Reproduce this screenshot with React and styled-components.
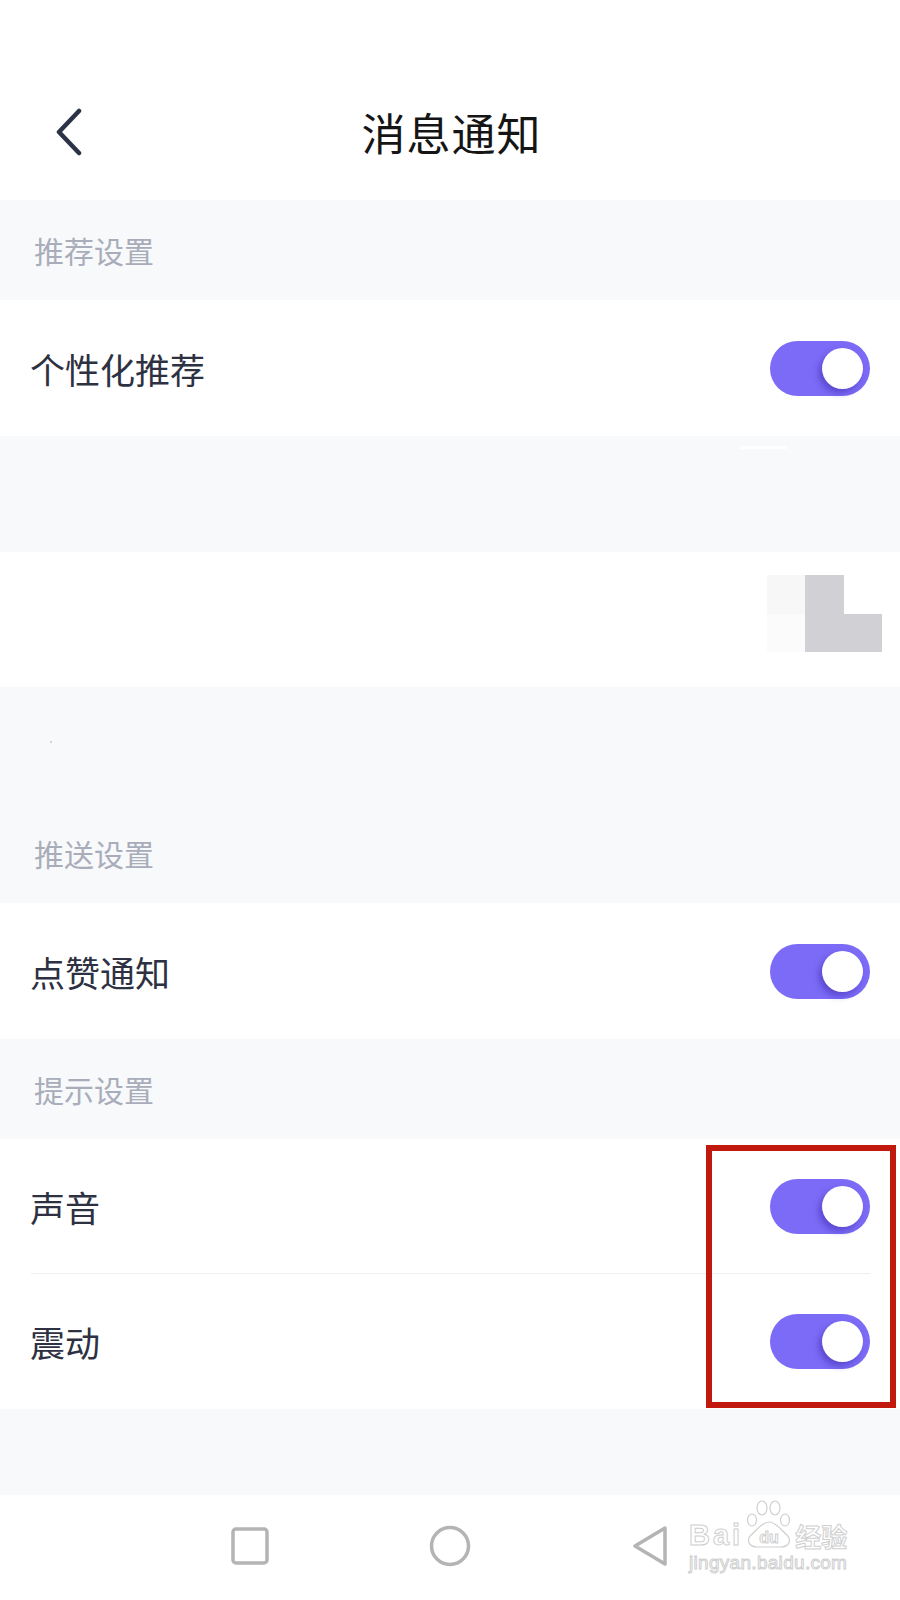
import React from 'react'
import styled, { createGlobalStyle } from 'styled-components'

const GlobalStyle = createGlobalStyle`
  html, body {
    margin: 0;
    padding: 0;
    background: #fff;
  }
  body {
    font-family: "Noto Sans CJK SC", "Noto Sans", sans-serif;
  }
`

const Page = styled.div`
  position: relative;
  width: 900px;
  min-height: 1600px;
  display: flex;
  flex-direction: column;
  background: #f8f9fb;
`

const Header = styled.header`
  height: 200px;
  box-sizing: border-box;
  padding: 72px 0 8px;
  background: #fff;
`

const NavBar = styled.div`
  height: 120px;
  display: grid;
  grid-template-columns: 1fr auto 1fr;
  align-items: center;
`

const BackButton = styled.div`
  padding-left: 55px;
  display: flex;
  align-items: center;
  color: #2c3346;
`

const Title = styled.h1`
  margin: 0 0 0 3px;
  font-size: 44px;
  font-weight: 400;
  color: #151515;
  letter-spacing: 1px;
`

const SectionTitle = styled.div`
  height: 100px;
  box-sizing: border-box;
  padding-left: 34px;
  display: flex;
  align-items: center;
  font-size: 30px;
  color: #a9adba;
`

const Gap = styled.div`
  height: ${p => p.h}px;
  box-sizing: border-box;
  padding: ${p => p.pad || '0'};
`

const Streak = styled.div`
  width: 47px;
  height: 3px;
  border-radius: 2px;
  background: #ffffff;
`

const Speck = styled.div`
  width: 2px;
  height: 2px;
  border-radius: 1px;
  background: #c4c6cc;
`

const Group = styled.div`
  background: #fff;
`

const Row = styled.div`
  height: ${p => p.h || 136}px;
  box-sizing: border-box;
  padding: 0 30px 0 30px;
  display: flex;
  align-items: center;
  justify-content: space-between;
`

const Label = styled.span`
  font-size: 35px;
  color: #2d3142;
`

const Divider = styled.div`
  height: 1px;
  margin: 0 30px 0 31px;
  background: #eeeff2;
`

const Track = styled.div`
  width: 100px;
  height: 55px;
  box-sizing: border-box;
  padding: 7px;
  border-radius: 28px;
  background: #7b6bf6;
  display: flex;
  justify-content: flex-end;
  align-items: center;
`

const Knob = styled.div`
  width: 41px;
  height: 41px;
  border-radius: 50%;
  background: #fff;
  box-shadow: -3px 4px 6px rgba(58, 38, 170, 0.5);
`

const MosaicRow = styled.div`
  height: 135px;
  box-sizing: border-box;
  padding: 23px 18px 0 0;
  background: #fff;
  display: flex;
  justify-content: flex-end;
  align-items: flex-start;
`

const Mosaic = styled.div`
  display: grid;
  grid-template-columns: repeat(3, 38.5px);
  grid-template-rows: repeat(2, 38.5px);
`

const Cell = styled.div`
  background: ${p => p.c};
`

const BottomBar = styled.nav`
  margin-top: auto;
  height: 105px;
  background: #fff;
  display: flex;
  padding-left: 150px;
`

const NavCell = styled.div`
  width: 200px;
  display: flex;
  align-items: center;
  justify-content: center;
  padding-bottom: 4px;
`

const Annotation = styled.div`
  position: absolute;
  left: 706px;
  top: 1145px;
  width: 190px;
  height: 263px;
  box-sizing: border-box;
  border: 6px solid #c1190e;
`

const Watermark = styled.div`
  position: absolute;
  left: 689px;
  top: 1500px;
  width: 170px;
  display: flex;
  flex-direction: column;
  align-items: flex-start;
  font-family: "Liberation Sans", Arial, sans-serif;
  color: #fff;
  -webkit-text-stroke: 1px #cfcfcf;
`

const MarkTop = styled.div`
  display: flex;
  align-items: flex-end;
  height: 48px;
`

const Bai = styled.span`
  font-size: 29px;
  font-weight: 700;
  letter-spacing: 3px;
  line-height: 1;
  margin-bottom: -2px;
`

const Jing = styled.span`
  font-family: "Noto Sans CJK SC", sans-serif;
  font-size: 26px;
  font-weight: 700;
  line-height: 1;
  margin-bottom: -1px;
`

const Url = styled.span`
  font-size: 19px;
  line-height: 1;
  margin-top: 5px;
  letter-spacing: 0.3px;
`

const Toggle = () => (
  <Track>
    <Knob />
  </Track>
)

const Paw = () => (
  <svg width="52" height="48" viewBox="0 0 52 48" fill="#fff" stroke="#cfcfcf" strokeWidth="1.2">
    <ellipse cx="9" cy="20" rx="4.5" ry="6" />
    <ellipse cx="19" cy="8" rx="5" ry="7" />
    <ellipse cx="32" cy="8" rx="5" ry="7" />
    <ellipse cx="42" cy="20" rx="4.5" ry="6" />
    <path d="M26 22 C19 22 14 30 8 35 C3 40 6 47 14 47 L38 47 C46 47 49 40 44 35 C38 30 33 22 26 22 Z" />
    <text x="26" y="43" textAnchor="middle" fontFamily="Liberation Sans, Arial, sans-serif" fontSize="16" fontWeight="700" fill="#fff" stroke="#cfcfcf" strokeWidth="1">du</text>
  </svg>
)

const Mosaic6 = ['#f7f7f8', '#d0d0d5', '#ffffff', '#fbfbfb', '#d0d0d5', '#d0d0d5']

export default () => (
  <Page>
    <GlobalStyle />
    <Header>
      <NavBar>
        <BackButton>
          <svg width="30" height="48" viewBox="0 0 30 48" fill="none" stroke="currentColor" strokeWidth="4.5" strokeLinecap="round" strokeLinejoin="round">
            <polyline points="24,3 4,24 24,45" />
          </svg>
        </BackButton>
        <Title>消息通知</Title>
        <div />
      </NavBar>
    </Header>

    <SectionTitle>推荐设置</SectionTitle>
    <Group>
      <Row>
        <Label>个性化推荐</Label>
        <Toggle />
      </Row>
    </Group>

    <Gap h={116} pad="10px 0 0 740px">
      <Streak />
    </Gap>

    <MosaicRow>
      <Mosaic>
        {Mosaic6.map((c, i) => <Cell key={i} c={c} />)}
      </Mosaic>
    </MosaicRow>

    <Gap h={116} pad="54px 0 0 50px">
      <Speck />
    </Gap>
    <SectionTitle>推送设置</SectionTitle>
    <Group>
      <Row>
        <Label>点赞通知</Label>
        <Toggle />
      </Row>
    </Group>

    <SectionTitle>提示设置</SectionTitle>
    <Group>
      <Row h={134}>
        <Label>声音</Label>
        <Toggle />
      </Row>
      <Divider />
      <Row h={135}>
        <Label>震动</Label>
        <Toggle />
      </Row>
    </Group>

    <BottomBar>
      <NavCell>
        <svg width="40" height="40" viewBox="0 0 40 40" fill="none" stroke="#b4b4b4" strokeWidth="3.5">
          <rect x="3" y="3" width="34" height="34" rx="3" />
        </svg>
      </NavCell>
      <NavCell>
        <svg width="44" height="44" viewBox="0 0 44 44" fill="none" stroke="#b4b4b4" strokeWidth="3.5">
          <circle cx="22" cy="22" r="18.5" />
        </svg>
      </NavCell>
      <NavCell>
        <svg width="40" height="44" viewBox="0 0 40 44" fill="none" stroke="#b4b4b4" strokeWidth="3.5" strokeLinejoin="round">
          <path d="M35 4 L5 22 L35 40 Z" />
        </svg>
      </NavCell>
    </BottomBar>

    <Annotation />

    <Watermark>
      <MarkTop>
        <Bai>Bai</Bai>
        <Paw />
        <Jing>经验</Jing>
      </MarkTop>
      <Url>jingyan.baidu.com</Url>
    </Watermark>
  </Page>
)
